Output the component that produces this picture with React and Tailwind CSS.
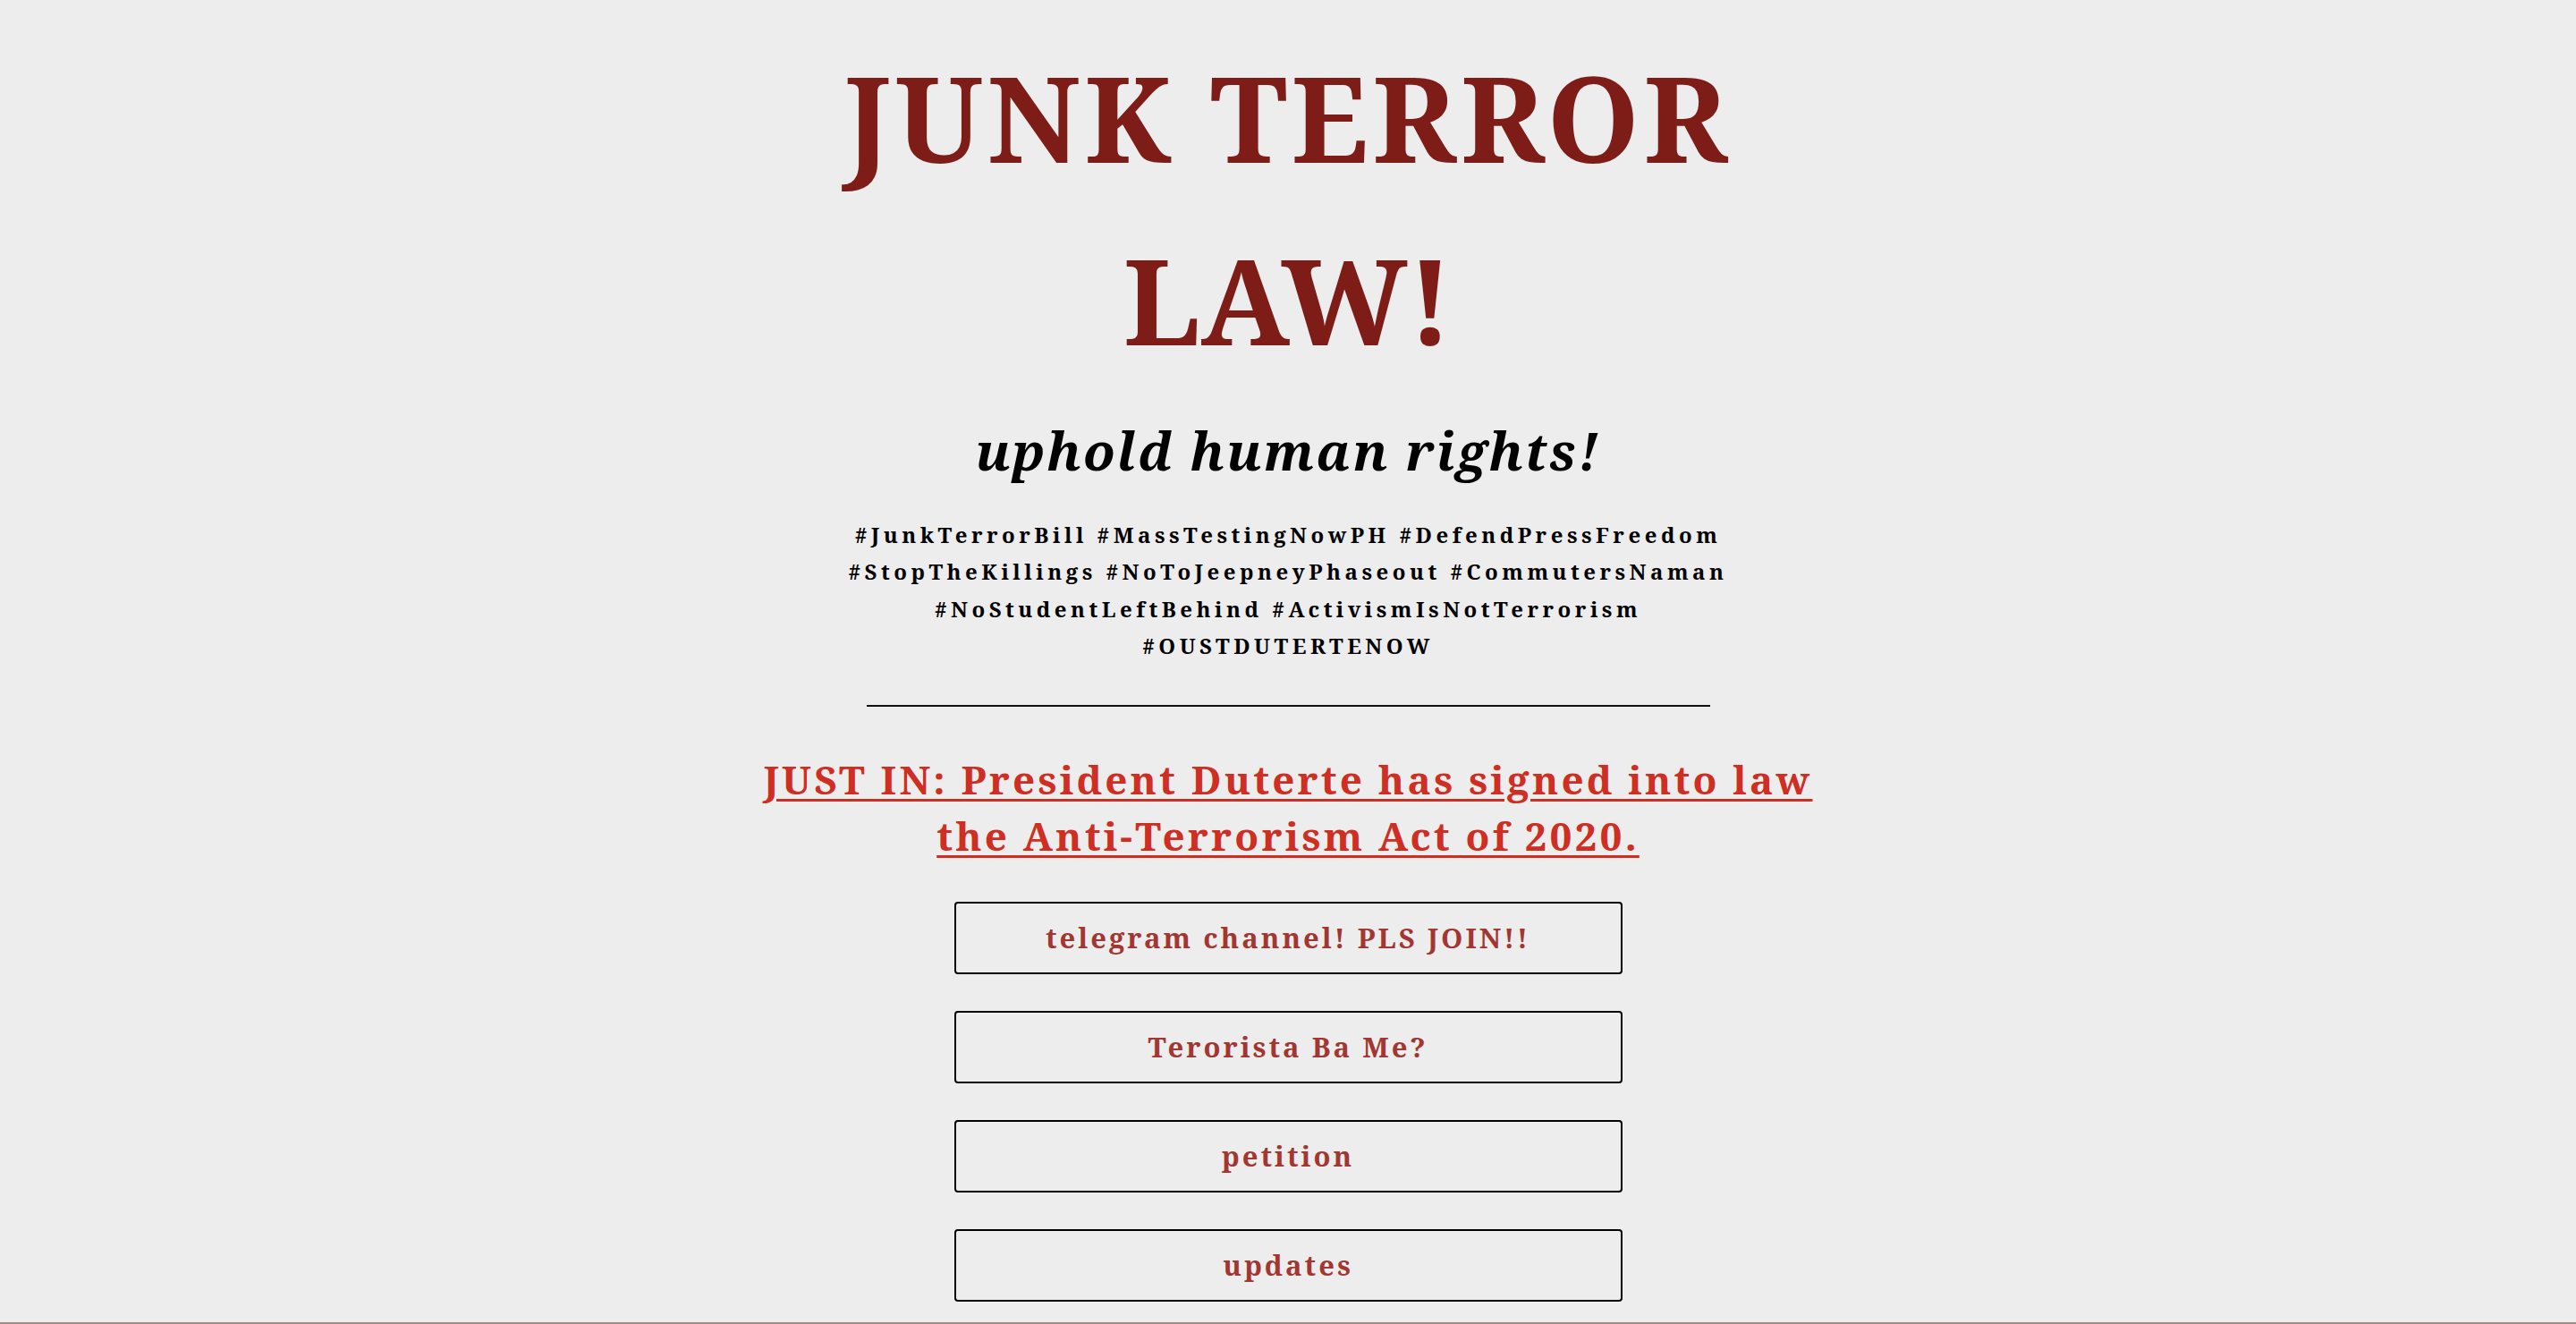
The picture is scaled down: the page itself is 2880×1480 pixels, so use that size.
import React from "react";

const serif = { fontFamily: '"Noto Serif", "DejaVu Serif", serif' };

function LinkButton({ children }) {
  return (
    <a
      href="#"
      className="flex h-[81px] w-[747px] items-center justify-center rounded-[4px] border-2 border-black text-[31px] font-bold tracking-[3px] text-[#a23732] no-underline"
    >
      {children}
    </a>
  );
}

export default function App() {
  return (
    <div
      className="flex h-[1480px] w-full flex-col overflow-hidden bg-[#ededed] text-center"
      style={serif}
    >
      <main className="flex flex-1 flex-col items-center">
        <h1 className="mt-[29px] text-[132px] font-bold leading-[204px] text-[#7e1c17]">
          <span className="tracking-[0.035em]">JUNK TERROR</span>
          <br />
          <span className="tracking-normal">LAW!</span>
        </h1>
        <h2 className="mt-[33px] text-[58px] font-bold italic leading-[67px] tracking-[0.042em] text-black">
          uphold human rights!
        </h2>
        <p className="mt-[40px] text-[24px] font-bold leading-[41.3px] tracking-[4.5px] text-black">
          #JunkTerrorBill #MassTestingNowPH #DefendPressFreedom
          <br />
          #StopTheKillings #NoToJeepneyPhaseout #CommutersNaman
          <br />
          #NoStudentLeftBehind #ActivismIsNotTerrorism
          <br />
          #OUSTDUTERTENOW
        </p>
        <hr className="mt-[46px] h-0 w-[943px] border-0 border-t-2 border-[#111111]" />
        <a
          href="#"
          className="mt-[50px] text-[44px] font-bold leading-[63px] tracking-[3.2px] text-[#cf2e22] underline decoration-[3px] underline-offset-[5px]"
        >
          JUST IN: President Duterte has signed into law
          <br />
          the Anti-Terrorism Act of 2020.
        </a>
        <nav className="mt-[42px] flex flex-col items-center gap-[41px]">
          <LinkButton>telegram channel! PLS JOIN!!</LinkButton>
          <LinkButton>Terorista Ba Me?</LinkButton>
          <LinkButton>petition</LinkButton>
          <LinkButton>updates</LinkButton>
        </nav>
      </main>
      <div className="h-[2px] w-full bg-[#a08c88]" />
    </div>
  );
}
